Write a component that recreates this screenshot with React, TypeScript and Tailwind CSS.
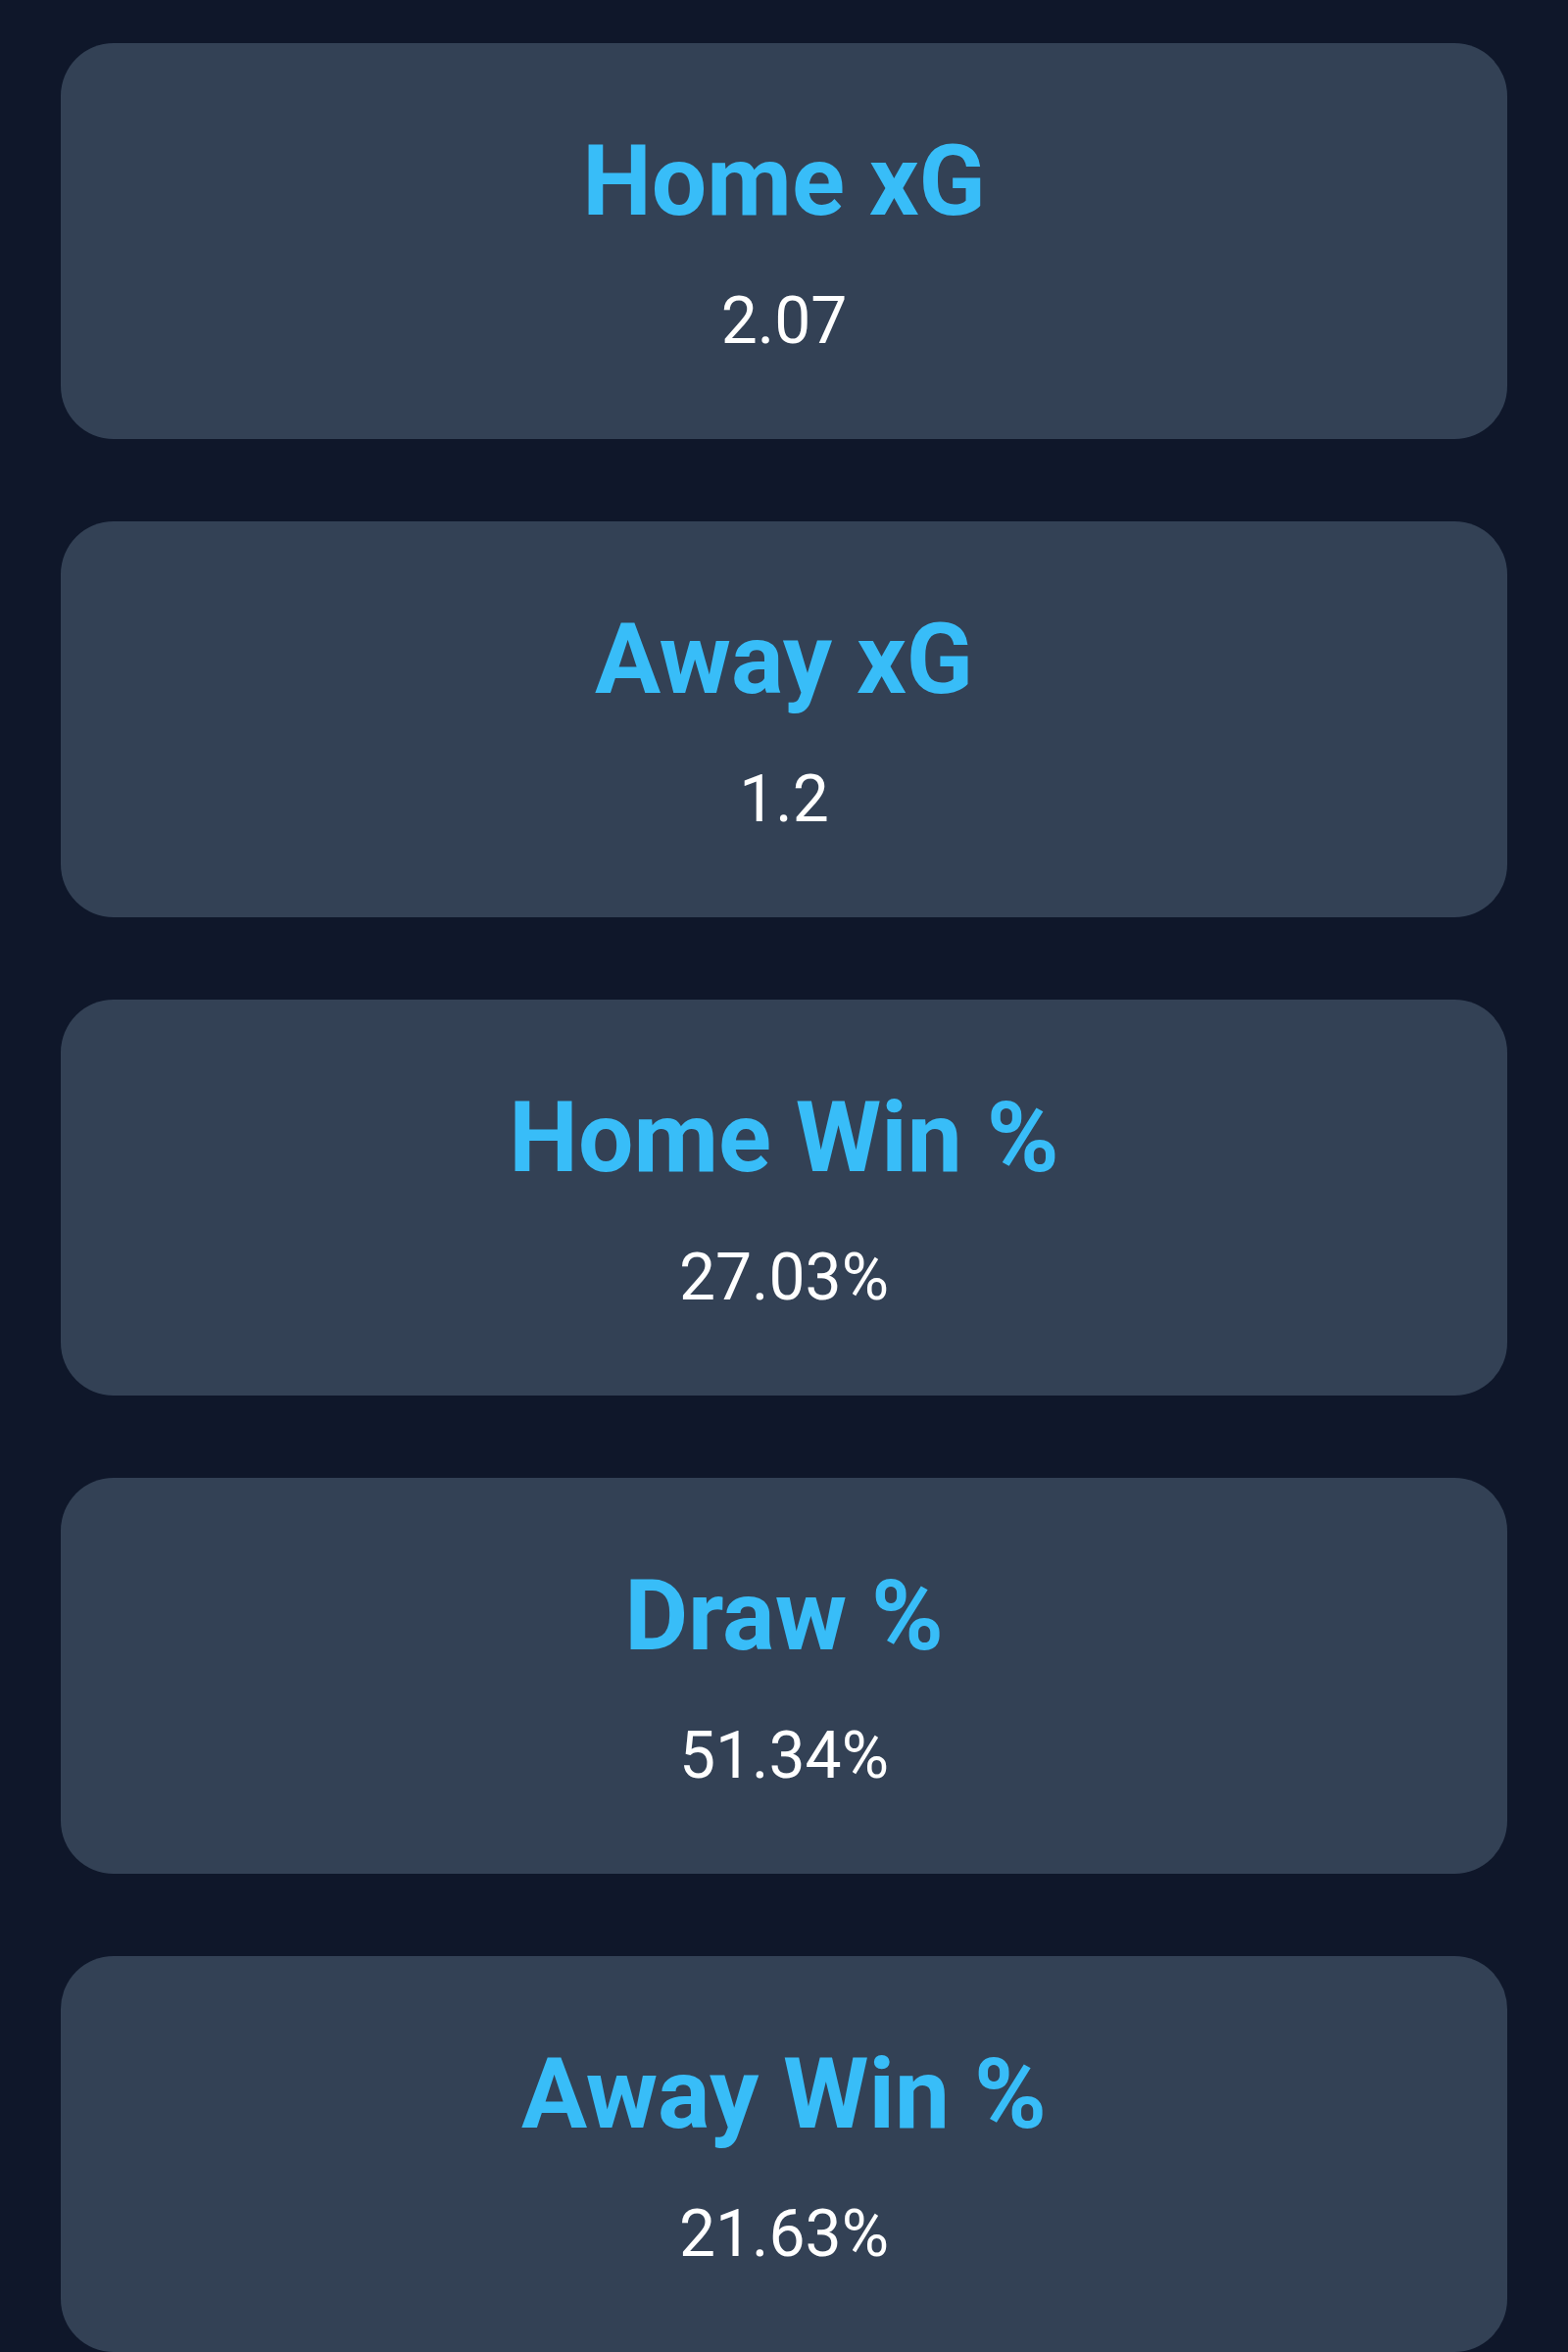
import React from 'react';

const stats = [
  { label: 'Home xG', value: '2.07' },
  { label: 'Away xG', value: '1.2' },
  { label: 'Home Win %', value: '27.03%' },
  { label: 'Draw %', value: '51.34%' },
  { label: 'Away Win %', value: '21.63%' },
];

const StatCard = ({ label, value }: { label: string; value: string }) => (
  <div className="bg-[#334155] rounded-[54px] pt-[81px] pb-[81px] flex flex-col items-center">
    <h2 className="text-[100px] leading-[120px] font-bold text-[#38bdf8]">{label}</h2>
    <p className="mt-[43px] text-[66px] leading-[79px] text-white">{value}</p>
  </div>
);

export default function App() {
  return (
    <div
      className="min-h-[2400px] bg-[#0f172a] px-[62px] pt-[44px] pb-[40px] flex flex-col gap-[84px]"
      style={{ fontFamily: 'Roboto, "Liberation Sans", sans-serif' }}
    >
      {stats.map((s) => (
        <StatCard key={s.label} label={s.label} value={s.value} />
      ))}
    </div>
  );
}
